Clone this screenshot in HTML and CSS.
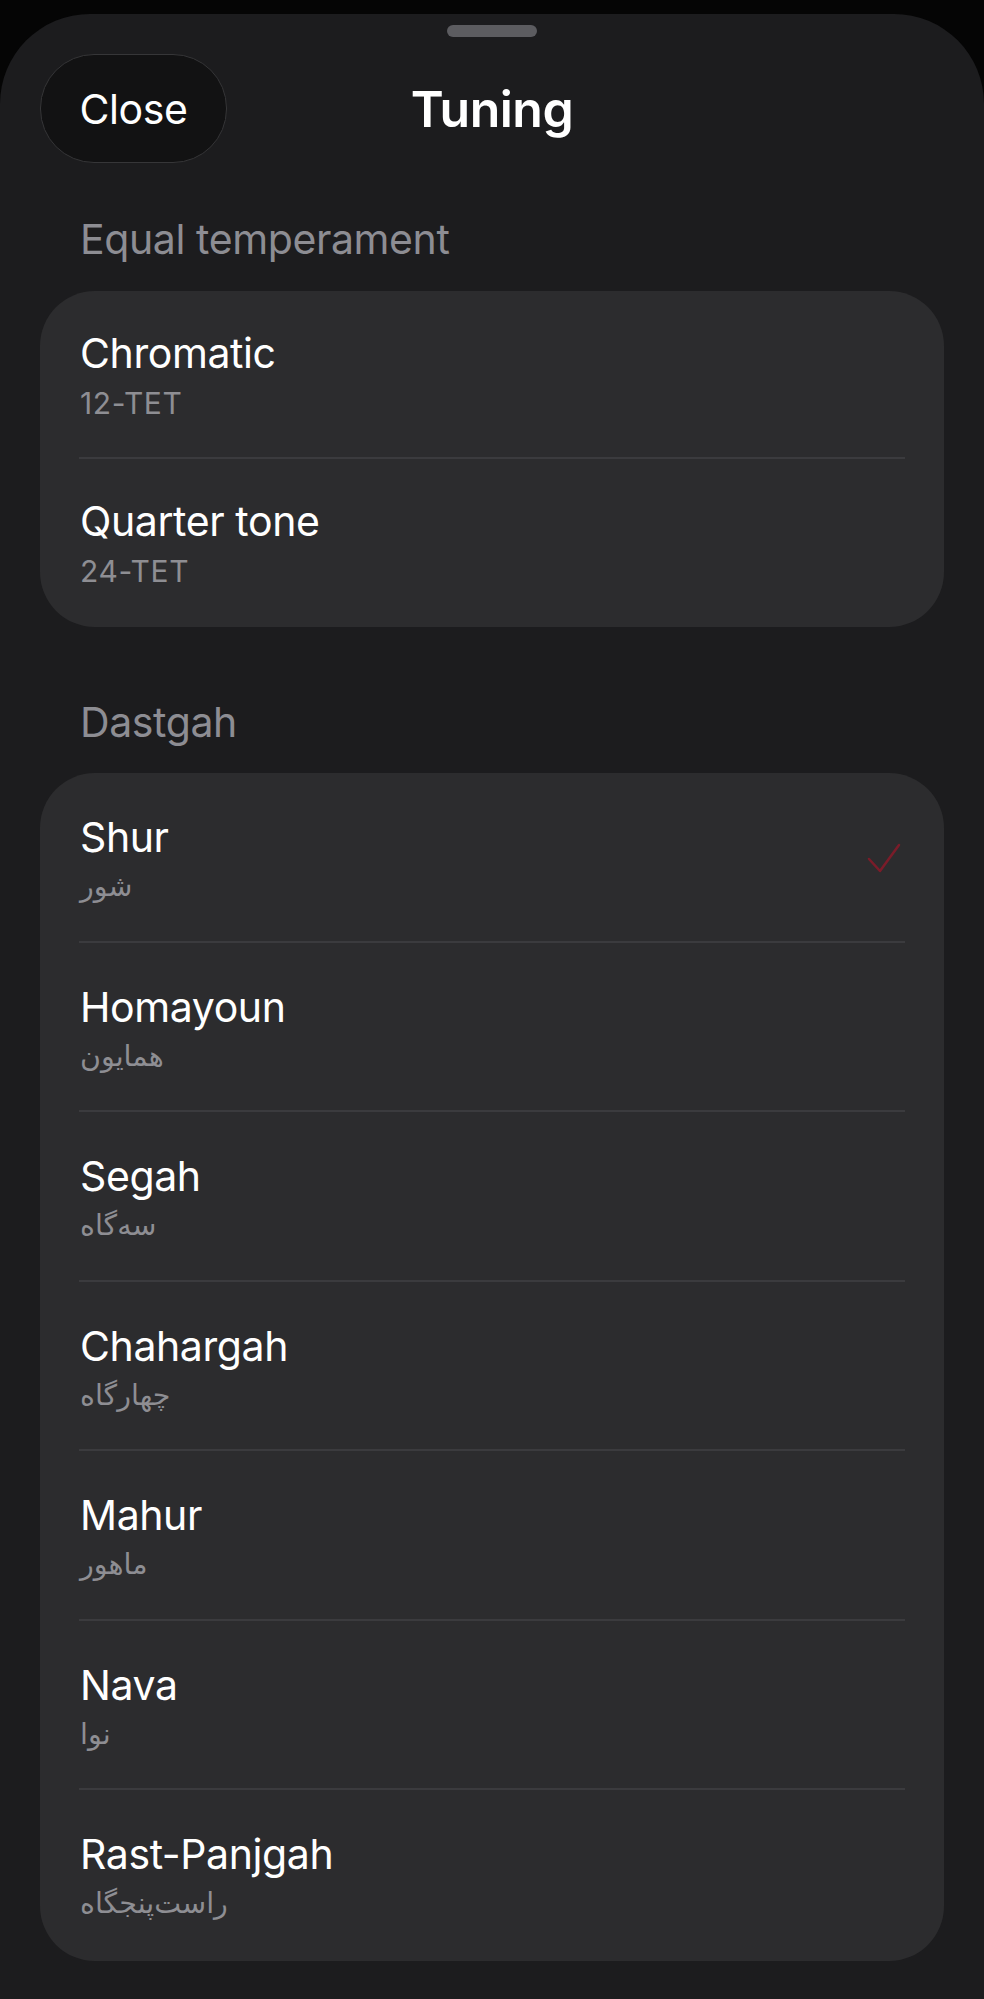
FILE: index.html
```html
<!DOCTYPE html>
<html lang="en">
<head>
    <meta charset="UTF-8">
    <meta name="viewport" content="width=device-width, initial-scale=1.0">
    <title>Tuning</title>
    <link rel="stylesheet" href="styles.css">
</head>
<body>

<div class="sheet">
    <div class="grabber"></div>

    <div class="header">
        <button class="close-btn" type="button">Close</button>
        <h1 class="title">Tuning</h1>
        <div></div>
    </div>

    <h2 class="section-title first">Equal temperament</h2>
    <div class="card">
        <div class="row">
            <div class="row-text">
                <div class="row-title">Chromatic</div>
                <div class="row-sub">12-TET</div>
            </div>
        </div>
        <div class="row">
            <div class="row-text">
                <div class="row-title">Quarter tone</div>
                <div class="row-sub">24-TET</div>
            </div>
        </div>
    </div>

    <h2 class="section-title">Dastgah</h2>
    <div class="card dastgah">
        <div class="row">
            <div class="row-text">
                <div class="row-title">Shur</div>
                <div class="row-sub fa" dir="rtl">شور</div>
            </div>
            <svg class="check" width="34" height="32" viewBox="0 0 34 32">
                <path d="M2 16 L13 28 L32 2" fill="none" stroke="#7a1c29" stroke-width="2.5" stroke-linecap="round" stroke-linejoin="round"/>
            </svg>
        </div>
        <div class="row">
            <div class="row-text">
                <div class="row-title">Homayoun</div>
                <div class="row-sub fa" dir="rtl">همایون</div>
            </div>
        </div>
        <div class="row">
            <div class="row-text">
                <div class="row-title">Segah</div>
                <div class="row-sub fa" dir="rtl">سه‌گاه</div>
            </div>
        </div>
        <div class="row">
            <div class="row-text">
                <div class="row-title">Chahargah</div>
                <div class="row-sub fa" dir="rtl">چهارگاه</div>
            </div>
        </div>
        <div class="row">
            <div class="row-text">
                <div class="row-title">Mahur</div>
                <div class="row-sub fa" dir="rtl">ماهور</div>
            </div>
        </div>
        <div class="row">
            <div class="row-text">
                <div class="row-title">Nava</div>
                <div class="row-sub fa" dir="rtl">نوا</div>
            </div>
        </div>
        <div class="row">
            <div class="row-text">
                <div class="row-title">Rast-Panjgah</div>
                <div class="row-sub fa" dir="rtl">راست‌پنجگاه</div>
            </div>
        </div>
    </div>
</div>

</body>
</html>
```

FILE: styles.css
```css
body {
    margin: 0;
    background-color: #050505;
    font-family: Inter, "DejaVu Sans", sans-serif;
    color: #ffffff;
}
.sheet {
    margin-top: 14px;
    min-height: calc(100vh - 14px);
    box-sizing: border-box;
    padding: 11px 40px 0 40px;
    background-color: #1c1c1e;
    border-radius: 90px 90px 0 0;
    overflow: hidden;
}
.grabber {
    width: 90px;
    height: 12px;
    margin: 0 auto;
    border-radius: 6px;
    background-color: #5c5c60;
}
.header {
    display: grid;
    grid-template-columns: 1fr auto 1fr;
    align-items: center;
    margin-top: 17px;
    height: 109px;
}
.close-btn {
    width: 187px;
    height: 109px;
    border-radius: 54px;
    background-color: #121213;
    border: 1.5px solid #363638;
    color: #ffffff;
    font-family: Inter, sans-serif;
    font-size: 41px;
    letter-spacing: -0.4px;
    padding: 0;
    cursor: pointer;
}
.title {
    margin: 0;
    font-size: 50px;
    font-weight: 600;
    letter-spacing: -0.5px;
    line-height: 60px;
}
.section-title {
    margin: 70px 0 26px 0;
    padding-left: 40px;
    font-size: 41px;
    font-weight: 400;
    line-height: 50px;
    letter-spacing: -0.4px;
    color: #8d8d93;
}
.section-title.first {
    margin-top: 51px;
    margin-bottom: 27px;
}
.card {
    background-color: #2c2c2e;
    border-radius: 55px;
}
.row {
    display: flex;
    align-items: center;
    justify-content: space-between;
    margin: 0 39px;
    padding: 37px 4px 36px 1px;
    border-bottom: 2px solid #3b3b3e;
}
.row:last-child {
    border-bottom: none;
    padding-bottom: 38px;
}
.dastgah .row {
    padding-top: 39px;
    padding-bottom: 35.5px;
}
.dastgah .row:last-child {
    padding-bottom: 39px;
}
.row-title {
    font-size: 41px;
    line-height: 50px;
    letter-spacing: -0.4px;
}
.row-sub {
    margin-top: 7px;
    font-size: 30px;
    line-height: 36px;
    letter-spacing: 0.6px;
    color: #8e8e93;
}
.row-sub.fa {
    font-family: "DejaVu Sans", sans-serif;
    font-size: 28.5px;
    letter-spacing: 0;
    text-align: left;
    unicode-bidi: plaintext;
}
.check {
    display: block;
}
```
